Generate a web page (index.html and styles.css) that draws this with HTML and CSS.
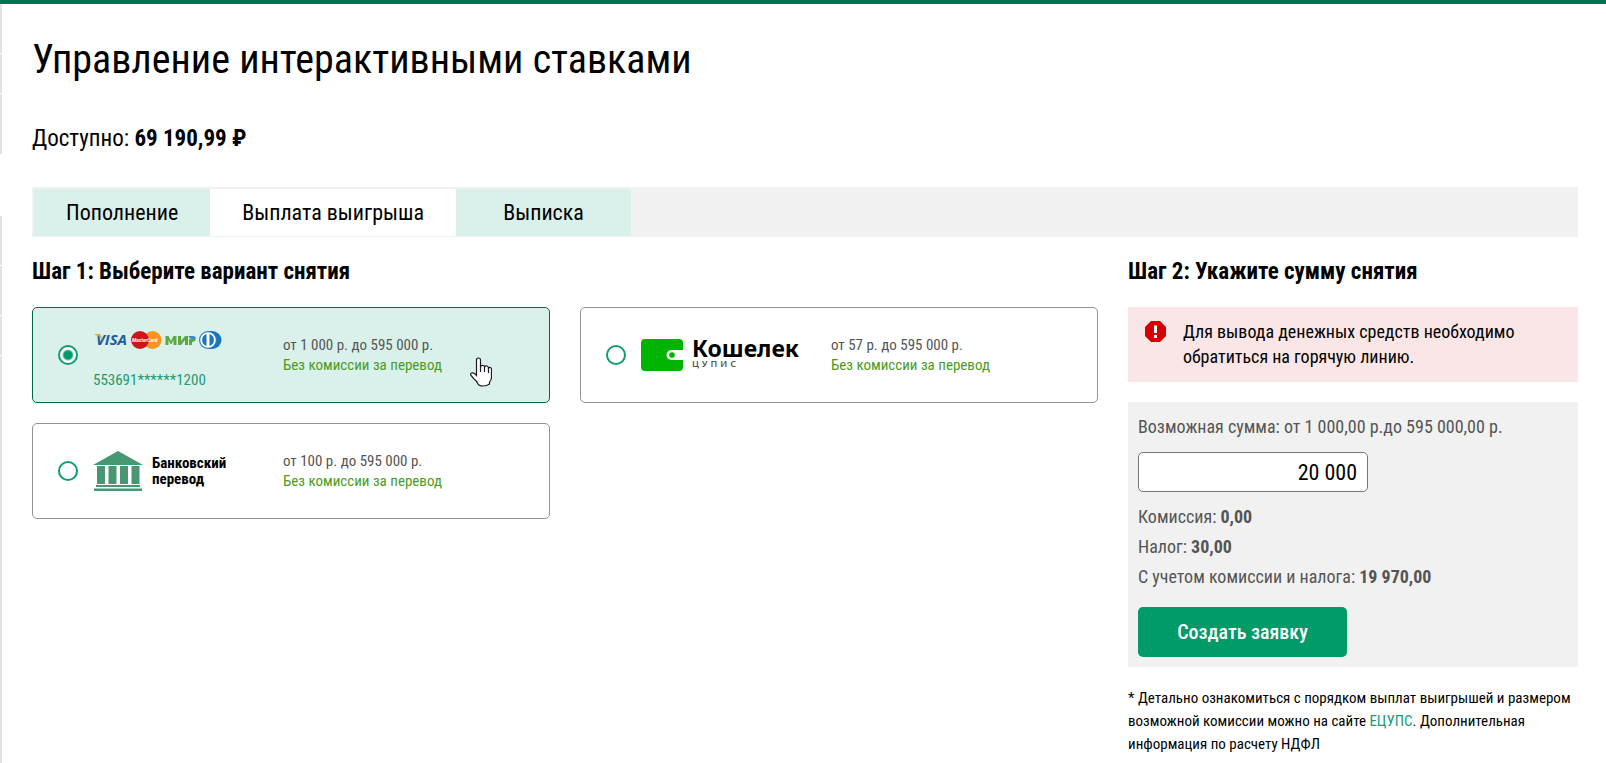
FILE: index.html
```html
<!DOCTYPE html>
<html lang="ru">
<head>
<meta charset="utf-8">
<meta name="viewport" content="width=device-width, initial-scale=1">
<title>Управление интерактивными ставками</title>
<link rel="stylesheet" href="styles.css">
</head>
<body>
<div class="topbar"></div>
<div class="shell">
  <aside class="rail" aria-hidden="true">
    <span class="rail-group"><i class="seg seg-a"></i><i class="seg seg-b"></i><i class="seg seg-c"></i></span>
    <span class="rail-group rail-group-last"><i class="seg seg-a"></i><i class="seg seg-a"></i><i class="seg seg-b"></i><i class="seg seg-rest"></i></span>
  </aside>
  <main class="page">
    <h1 class="title">Управление интерактивными ставками</h1>
    <p class="balance">Доступно: <b>69 190,99 ₽</b></p>
    <nav class="tabs" role="tablist">
      <button class="tab" type="button" role="tab">Пополнение</button>
      <button class="tab tab-active" type="button" role="tab" aria-selected="true">Выплата выигрыша</button>
      <button class="tab" type="button" role="tab">Выписка</button>
    </nav>
    <div class="columns">
      <section class="step">
        <h2 class="step-title">Шаг 1: Выберите вариант снятия</h2>
        <div class="methods">
          <label class="method method-selected">
            <input class="radio" type="radio" name="method" checked>
            <span class="brand brand-cards">
              <svg class="cards-logo" viewBox="0 0 130 40" width="130" height="40" role="img" aria-label="Visa, MasterCard, Мир, Diners Club">
                <text x="3" y="25" class="visa">VISA</text>
                <path d="M1 14h6l3 6-3-3z" fill="#dba12e"/>
                <circle cx="59.500" cy="20" r="9" fill="#f7941d"/>
                <circle cx="47" cy="20" r="9" fill="#cc1719"/>
                <text x="39" y="22" class="mc">MasterCard</text>
                <path d="M72.500 25v-9h3l2.500 5 2.500-5h3v9h-3v-5l-2 4h-1l-2-4v5z" fill="#5ca845"/>
                <path d="M85 25v-9h3v5l4-5h3v9h-3v-5l-4 5z" fill="#5ca845"/>
                <path d="M96 19h7q-1 3-4 3v3h-3z" fill="#5ca845"/>
                <path d="M95.500 16h4q4 0 3 3h-4q-2 0-3-3z" fill="#3b86c4"/>
                <path d="M115 11h4a9.500 9 0 0 1 0 18h-4z" fill="#1b75bc"/>
                <circle cx="115" cy="20" r="9" fill="#2b83c6"/>
                <circle cx="115" cy="20" r="7.800" fill="#fff"/>
                <path d="M113.500 14a6.300 6.300 0 0 0 0 12zM116.500 14a6.300 6.300 0 0 1 0 12z" fill="#1b75bc"/>
              </svg>
              <span class="card-number">553691******1200</span>
            </span>
            <span class="terms"><span>от 1 000 р. до 595 000 р.</span><span class="free">Без комиссии за перевод</span></span>
            <svg class="pointer" viewBox="0 0 22 30" width="22" height="30" aria-hidden="true">
              <path d="M6.500 18.500V3Q6.500 1 8.500 1T10.500 3V10Q11 8 13 8.500T14.500 10Q15.500 8.500 17 9T18.500 11Q19.500 10 20.500 10.500T21.500 12.500V20Q21.500 23 19.500 25V27Q17 29 13 29T8 27Q6.500 23.500 4 22L1 18.500Q0 16.500 1.500 16T4.500 16.500Z" fill="#fff" stroke="#1c1c28" stroke-width="1.200"/>
              <path d="M10.500 8v7M14.500 9v6M18.500 11v5" stroke="#1c1c28" stroke-width="1.200"/>
            </svg>
          </label>
          <label class="method">
            <input class="radio" type="radio" name="method">
            <span class="brand">
              <svg viewBox="0 0 42 32" width="42" height="32" aria-hidden="true">
                <path d="M4 0h34q4 0 4 4v7H30.500a5 5 0 0 0 0 10H42v7q0 4-4 4H4q-4 0-4-4V4q0-4 4-4z" fill="#00b300"/>
                <circle cx="31" cy="16" r="2.800" fill="#00b300"/>
              </svg>
              <span class="wallet"><b class="wallet-name">Кошелек</b><span class="wallet-sub"><i>Ц</i><i>У</i><i>П</i><i>И</i><i>С</i></span></span>
            </span>
            <span class="terms"><span>от 57 р. до 595 000 р.</span><span class="free">Без комиссии за перевод</span></span>
          </label>
          <label class="method">
            <input class="radio" type="radio" name="method">
            <span class="brand">
              <svg viewBox="0 0 50 40" width="50" height="40" aria-hidden="true">
                <path d="M25 0 50 14H0zM4 15h8v18H4zM15.500 15h8v18h-8zM27 15h8v18h-8zM38.500 15h8v18h-8zM3 34h44v2H3zM1 37.500h48V40H1z" fill="#459871"/>
              </svg>
              <b class="bank">Банковский<br>перевод</b>
            </span>
            <span class="terms"><span>от 100 р. до 595 000 р.</span><span class="free">Без комиссии за перевод</span></span>
          </label>
        </div>
      </section>
      <section class="step step-amount">
        <h2 class="step-title">Шаг 2: Укажите сумму снятия</h2>
        <div class="alert" role="alert">
          <svg class="alert-icon" viewBox="0 0 21 21" width="21" height="21" aria-hidden="true">
            <path d="M6 0h9l6 6v9l-6 6H6l-6-6V6z" fill="#d60000"/>
            <path d="M9 4.500h3V12H9zM9 14h3v3H9z" fill="#fff"/>
          </svg>
          <p class="alert-text">Для вывода денежных средств необходимо обратиться на горячую линию.</p>
        </div>
        <form class="panel">
          <label class="line" for="amount">Возможная сумма: от 1 000,00 р.до 595 000,00 р.</label>
          <input class="amount" id="amount" type="text" value="20 000">
          <p class="line">Комиссия: <b>0,00</b></p>
          <p class="line">Налог: <b>30,00</b></p>
          <p class="line">С учетом комиссии и налога: <b>19 970,00</b></p>
          <button class="submit" type="button">Создать заявку</button>
        </form>
        <p class="note">* Детально ознакомиться с порядком выплат выигрышей и размером возможной комиссии можно на сайте <a class="link" href="#">ЕЦУПС</a>. Дополнительная информация по расчету НДФЛ</p>
      </section>
    </div>
  </main>
</div>
</body>
</html>
```
FILE: styles.css
```css
* { box-sizing: border-box; }
body, h1, h2, p { margin: 0; }
body {
  min-height: 100vh;
  display: flex;
  flex-direction: column;
  background: #fff;
  color: #000;
  font-family: "Roboto Condensed", Roboto, "Liberation Sans", sans-serif;
}
button, input { font-family: inherit; }
.topbar { height: 4px; background: #007352; }
.shell { flex: 1; display: flex; }

.rail { width: 2px; display: flex; flex-direction: column; gap: 62px; }
.rail-group { display: flex; flex-direction: column; gap: 1px; }
.rail-group-last { flex: 1; }
.seg { background: #e2e2e2; }
.seg-a { height: 49px; }
.seg-b { height: 39px; }
.seg-c { height: 60px; }
.seg-rest { flex: 1; }

.page { flex: 1; min-width: 0; padding: 31px 28px 8px 30px; }
.title { font-size: 40px; line-height: 50px; font-weight: 400; }
.balance { margin-top: 40px; font-size: 23px; line-height: 28px; }
.tabs {
  display: flex;
  margin-top: 34px;
  padding: 2px 2px 1px;
  background: #f1f1f1;
}
.tab {
  min-width: 175px;
  height: 47px;
  padding: 0 32px;
  border: 0;
  background: #d9f1ea;
  color: #000;
  font-size: 22px;
}
.tab-active { background: #fff; }

.columns { display: flex; align-items: flex-start; gap: 30px; margin-top: 21px; }
.step { flex: 1; min-width: 0; }
.step-amount { flex: 0 0 450px; }
.step-title { font-size: 23px; line-height: 28px; font-weight: 700; }
.methods {
  display: grid;
  grid-template-columns: 1fr 1fr;
  gap: 20px 30px;
  margin-top: 21px;
}
.method {
  position: relative;
  display: flex;
  align-items: center;
  min-height: 96px;
  padding: 0 25px;
  border: 1px solid #939393;
  border-radius: 5px;
}
.method-selected { background: #d9f1ea; border-color: #00694b; }
.radio {
  appearance: none;
  flex: none;
  width: 20px;
  height: 20px;
  margin: 0 15px 0 0;
  border: 2px solid #109c6f;
  border-radius: 50%;
  background: #fff;
}
.radio:checked { background: radial-gradient(circle, #009b69 4px, #fff 6px); }
.brand { display: flex; align-items: center; gap: 9px; width: 190px; }
.brand-cards { flex-direction: column; align-items: flex-start; gap: 10px; }
.visa { font: italic 700 15px "Open Sans", sans-serif; fill: #1c5b9e; }
.mc { font: italic 700 5px Roboto, sans-serif; fill: #fff; }
.card-number { font-size: 15px; line-height: 20px; color: #229a71; }
.wallet { display: flex; flex-direction: column; padding-bottom: 4px; }
.wallet-name { font: 700 23px/21px "Noto Sans", sans-serif; }
.wallet-sub {
  display: flex;
  gap: 3px;
  font: 600 9px/9px "Noto Sans", sans-serif;
  color: #555;
}
.wallet-sub i { font-style: normal; }
.bank { font-size: 15px; line-height: 16px; }
.terms { display: flex; flex-direction: column; font-size: 15px; line-height: 20px; color: #555; }
.free { color: #4b9b1e; }
.pointer { position: absolute; left: 437px; top: 49px; }

.alert { display: flex; gap: 17px; margin-top: 21px; padding: 12px 17px 13px; background: #fae6e6; }
.alert-icon { flex: none; margin-top: 2px; }
.alert-text { font-size: 18px; line-height: 25px; }
.panel {
  display: flex;
  flex-direction: column;
  align-items: flex-start;
  margin-top: 20px;
  padding: 10px;
  background: #f1f1f1;
  color: #555;
}
.line { font-size: 18px; line-height: 30px; }
.amount {
  width: 230px;
  height: 40px;
  margin: 10px 0;
  padding: 0 10px;
  border: 1px solid #767676;
  border-radius: 5px;
  background: #fff;
  color: #000;
  font-size: 22px;
  text-align: right;
}
.submit {
  min-width: 209px;
  height: 50px;
  margin-top: 15px;
  padding: 0 39px;
  border: 0;
  border-radius: 5px;
  background: #009b69;
  color: #fff;
  font-size: 20px;
  font-weight: 500;
}
.note { margin-top: 20px; font-size: 15px; line-height: 23px; }
.link { color: #229a71; text-decoration: none; }
```
